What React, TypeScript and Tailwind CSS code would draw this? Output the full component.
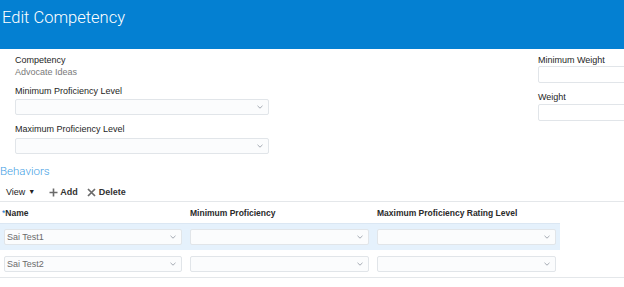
import React from 'react';

const FONT = '"Liberation Sans", Arial, sans-serif';
const LIGHT = 'Roboto, "Liberation Sans", sans-serif';

function Chevron() {
  return (
    <svg width="6" height="4" viewBox="0 0 6 4" fill="none" className="shrink-0">
      <path d="M0.5 0.8 L3 3.2 L5.5 0.8" stroke="#9aa2a9" strokeWidth="0.9" />
    </svg>
  );
}

function Select({ value, className = '' }: { value?: string; className?: string }) {
  return (
    <div
      className={`h-[16px] border border-[#e1e5e9] bg-[#fbfcfd] rounded-[2px] flex items-center justify-between pl-[2px] pr-[5px] ${className}`}
    >
      <span className="text-[9px] leading-[12px] text-[#6b6b6b]">{value}</span>
      <Chevron />
    </div>
  );
}

function TextInput() {
  return <div className="h-[17px] border border-[#e1e5e9] bg-white rounded-[2px]" />;
}

function Label({ children, className = '' }: { children: React.ReactNode; className?: string }) {
  return <div className={`text-[9px] leading-[12px] text-[#1e1e1e] ${className}`}>{children}</div>;
}

export default function App() {
  const rows = ['Sai Test1', 'Sai Test2'];

  return (
    <div className="w-[624px] h-[287px] overflow-hidden bg-white" style={{ fontFamily: FONT }}>
      {/* ── Header ───────────────────────────── */}
      <div className="h-[49px] bg-[#0480d2] pl-[2px] pt-[8px]">
        <h1 className="text-[16.5px] leading-[20px] font-light text-white" style={{ fontFamily: LIGHT }}>
          Edit Competency
        </h1>
      </div>

      {/* ── Form ─────────────────────────────── */}
      <div className="flex">
        <div className="w-[269px] shrink-0 pl-[15px] pt-[5px]">
          <Label>Competency</Label>
          <div className="text-[9px] leading-[12px] text-[#7a7a7a]">Advocate Ideas</div>
          <Label className="mt-[7px]">Minimum Proficiency Level</Label>
          <Select className="mt-[2px]" />
          <Label className="mt-[8px]">Maximum Proficiency Level</Label>
          <Select className="mt-[3px]" />
        </div>
        <div className="ml-[269px] w-[120px] shrink-0 pt-[5px]">
          <Label>Minimum Weight</Label>
          <TextInput />
          <Label className="mt-[9px] -translate-y-[1px]">Weight</Label>
          <TextInput />
        </div>
      </div>

      {/* ── Behaviors ────────────────────────── */}
      <div
        className="mt-[10px] text-[11.5px] leading-[14px] font-light text-[#43a0e4]"
        style={{ fontFamily: LIGHT }}
      >
        Behaviors
      </div>

      <div className="mt-[8px] h-[12px] flex items-center pl-[6px] text-[9px] leading-[12px] font-semibold text-[#333]">
        <span className="font-normal text-[#222]">View</span>
        <span className="ml-[3px] text-[7px] text-[#222]">▼</span>
        <span className="ml-[14px] flex items-center">
          <svg width="9" height="9" viewBox="0 0 9 9">
            <path d="M4.5 0.5 V8.5 M0.5 4.5 H8.5" stroke="#6a6a6a" strokeWidth="1.6" />
          </svg>
          <span className="ml-[2px]">Add</span>
        </span>
        <span className="ml-[9px] flex items-center">
          <svg width="9" height="9" viewBox="0 0 9 9">
            <path d="M1 1 L8 8 M8 1 L1 8" stroke="#6a6a6a" strokeWidth="1.7" />
          </svg>
          <span className="ml-[3px]">Delete</span>
        </span>
      </div>

      {/* ── Table ────────────────────────────── */}
      <div className="mt-[3px] border-t-[1.5px] border-b border-[#e4e7ea]">
        <div className="w-[560px]">
          <div className="grid grid-cols-[186px_187px_187px] h-[21px] items-center text-[8.5px] leading-[12px] font-bold text-[#2a2a2a]">
            <div className="pl-[2px]">
              <span className="text-[#0572ce] font-normal">*</span>Name
            </div>
            <div className="pl-[4px]">Minimum Proficiency</div>
            <div className="pl-[4px]">Maximum Proficiency Rating Level</div>
          </div>
          {rows.map((name, i) => (
            <div
              key={name}
              className={`grid grid-cols-[186px_187px_187px] h-[27px] items-center ${
                i === 0 ? 'bg-[#e5f1fc] border-t border-[#dbe7f3]' : ''
              }`}
            >
              <div className="px-[4px]">
                <Select value={name} />
              </div>
              <div className="px-[4px]">
                <Select />
              </div>
              <div className="px-[4px]">
                <Select />
              </div>
            </div>
          ))}
        </div>
      </div>
    </div>
  );
}
